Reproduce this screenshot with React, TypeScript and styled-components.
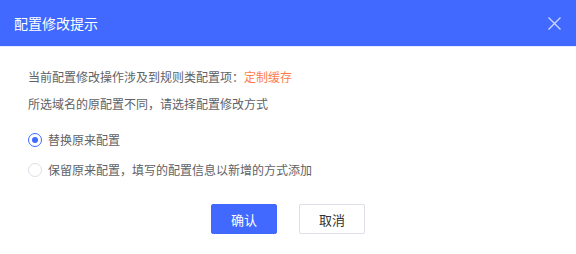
import React, { ReactElement, useState } from 'react';
import styled, { createGlobalStyle } from 'styled-components';

const GlobalStyle = createGlobalStyle`
  html, body {
    margin: 0;
    padding: 0;
    background: #ffffff;
  }
  body {
    font-family: "Noto Sans CJK SC", "Noto Sans", sans-serif;
  }
`;

const Dialog = styled.div`
  width: 576px;
  height: 254px;
  background-color: white;
  display: flex;
  flex-direction: column;
`;

const Header = styled.div`
  height: 47px;
  flex-shrink: 0;
  background-color: #4169ff;
  display: flex;
  align-items: center;
  justify-content: space-between;
  padding: 0 15px 0 14px;
  box-sizing: border-box;
  border-bottom: 1px solid #e6ecff;
`;

const Title = styled.div`
  color: #ffffff;
  font-size: 14px;
  line-height: 20px;
`;

const CloseButton = styled.button`
  width: 14px;
  height: 14px;
  padding: 0;
  border: none;
  background: transparent;
  display: flex;
  align-items: center;
  justify-content: center;
  cursor: pointer;
`;

const Body = styled.div`
  padding: 20px 28px 0;
  display: flex;
  flex-direction: column;
`;

const Line = styled.div`
  font-size: 12px;
  line-height: 20px;
  color: #606266;
  & + & {
    margin-top: 7px;
  }
`;

const Highlight = styled.span`
  color: #ff7d4d;
`;

const RadioGroup = styled.div`
  display: flex;
  flex-direction: column;
  gap: 10px;
  margin-top: 16px;
`;

const RadioRow = styled.label`
  display: flex;
  align-items: center;
  height: 20px;
  cursor: pointer;
`;

const RadioCircle = styled.span<{ $checked: boolean }>`
  width: 14px;
  height: 14px;
  box-sizing: border-box;
  border-radius: 50%;
  border: 1px solid ${(p) => (p.$checked ? '#4169ff' : '#dcdfe6')};
  display: flex;
  align-items: center;
  justify-content: center;
  margin-right: 6px;
  &::after {
    content: '';
    width: 6px;
    height: 6px;
    border-radius: 50%;
    background-color: #4169ff;
    display: ${(p) => (p.$checked ? 'block' : 'none')};
  }
`;

const RadioLabel = styled.span`
  font-size: 12px;
  color: #606266;
  line-height: 20px;
`;

const Footer = styled.div`
  display: flex;
  justify-content: center;
  gap: 22px;
  margin-top: 24px;
`;

const Button = styled.button<{ $primary?: boolean }>`
  width: 66px;
  height: 30px;
  box-sizing: border-box;
  border-radius: 2px;
  font-family: inherit;
  font-size: 13px;
  padding: 0;
  cursor: pointer;
  border: 1px solid ${(p) => (p.$primary ? '#4169ff' : '#dcdfe6')};
  background-color: ${(p) => (p.$primary ? '#4169ff' : '#ffffff')};
  color: ${(p) => (p.$primary ? '#ffffff' : '#333333')};
`;

const options = [
  '替换原来配置',
  '保留原来配置，填写的配置信息以新增的方式添加',
];

const App = (): ReactElement => {
  const [selected, setSelected] = useState(0);

  return (
    <>
      <GlobalStyle />
      <Dialog>
        <Header>
          <Title>配置修改提示</Title>
          <CloseButton aria-label="关闭">
            <svg width="13" height="13" viewBox="0 0 13 13">
              <path
                d="M0.5 0.5 L12.5 12.5 M12.5 0.5 L0.5 12.5"
                stroke="rgba(255,255,255,0.75)"
                strokeWidth="1.3"
                fill="none"
              />
            </svg>
          </CloseButton>
        </Header>
        <Body>
          <Line>
            当前配置修改操作涉及到规则类配置项：<Highlight>定制缓存</Highlight>
          </Line>
          <Line>所选域名的原配置不同，请选择配置修改方式</Line>
          <RadioGroup>
            {options.map((text, i) => (
              <RadioRow key={text} onClick={() => setSelected(i)}>
                <RadioCircle $checked={selected === i} />
                <RadioLabel>{text}</RadioLabel>
              </RadioRow>
            ))}
          </RadioGroup>
          <Footer>
            <Button $primary>确认</Button>
            <Button>取消</Button>
          </Footer>
        </Body>
      </Dialog>
    </>
  );
};

export default App;
